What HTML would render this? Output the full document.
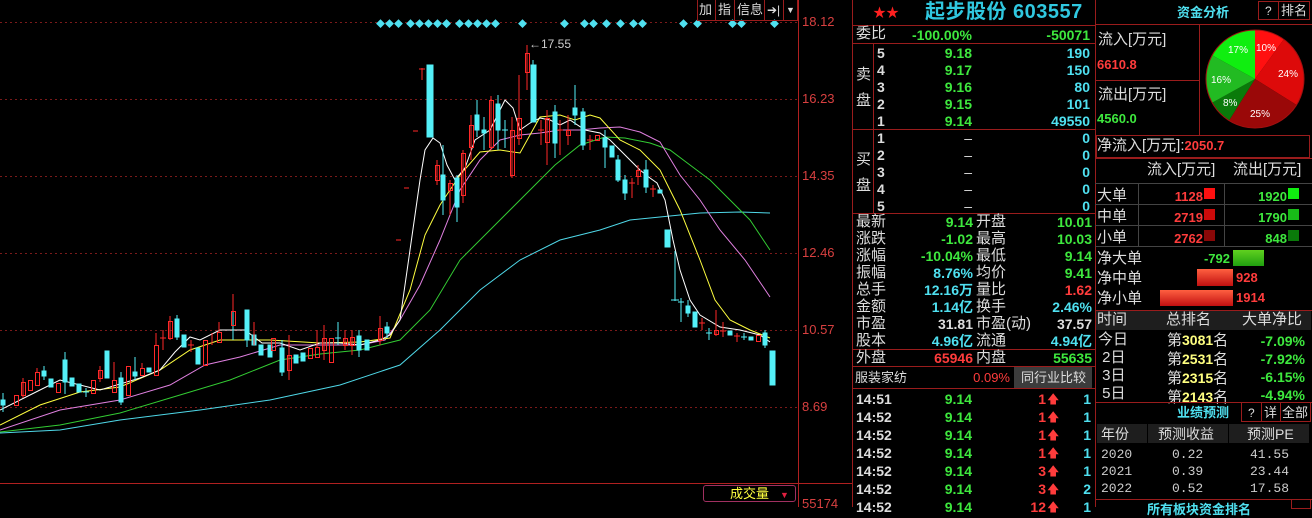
<!DOCTYPE html>
<html><head><meta charset="utf-8">
<style>
*{margin:0;padding:0;box-sizing:border-box}
body{width:1312px;height:507px;background:#000;overflow:hidden;position:relative;font-family:"Liberation Sans","Noto Sans CJK SC",sans-serif;font-size:14px;color:#ddd}
.t{position:absolute;line-height:16px;white-space:nowrap}
.r{text-align:right}
.b{font-weight:bold}
.g{color:#3ee83e}.rd{color:#ff3c3c}.c{color:#4fe0f0}.w{color:#ddd}.y{color:#ffff80}
.hl{position:absolute;height:1px;background:#9a1c1c}
.vl{position:absolute;width:1px;background:#9a1c1c}
.ax{position:absolute;color:#d84040;font-size:13px;line-height:14px}
.box{position:absolute;border:1px solid #9a1c1c}
</style></head><body>

<svg width="852" height="507" style="position:absolute;left:0;top:0">
<g stroke="#7a1a1a" stroke-dasharray="2,3" stroke-width="1">
<line x1="0" y1="22.5" x2="798" y2="22.5"/><line x1="0" y1="99.5" x2="798" y2="99.5"/>
<line x1="0" y1="176.5" x2="798" y2="176.5"/><line x1="0" y1="253.5" x2="798" y2="253.5"/>
<line x1="0" y1="330.5" x2="798" y2="330.5"/><line x1="0" y1="407.5" x2="798" y2="407.5"/>
</g>
<line x1="798.5" y1="0" x2="798.5" y2="507" stroke="#b02020"/>
<line x1="0" y1="483.5" x2="852" y2="483.5" stroke="#b02020"/>
<g fill="#4fe0f0" font-size="9">
<text x="376" y="27">◆◆◆</text><text x="406" y="27">◆◆◆◆◆</text><text x="442" y="27">◆</text><text x="455" y="27">◆◆◆◆◆</text>
<text x="518" y="27">◆</text><text x="560" y="27">◆</text><text x="580" y="27">◆◆</text><text x="602" y="27">◆</text>
<text x="616" y="27">◆</text><text x="629" y="27">◆◆</text><text x="679" y="27">◆</text><text x="693" y="27">◆</text>
<text x="728" y="27">◆◆</text><text x="770" y="27">◆</text>
</g>
<text x="529" y="48" fill="#ccc" font-size="12">←17.55</text>
<g fill="none" stroke-width="1">
<polyline stroke="#4fd8e8" points="0,433 60,430 120,420 200,410 270,400 340,385 400,365 440,330 480,290 520,260 560,240 600,230 630,220 660,217 700,213 740,212 770,213"/>
<polyline stroke="#33cc33" points="0,432 60,425 120,413 180,395 230,380 280,360 320,354 360,350 400,340 430,310 460,260 500,220 530,190 555,165 580,145 605,137 625,138 650,143 670,150 690,165 710,180 730,200 750,220 770,250"/>
<polyline stroke="#e080e0" points="0,430 60,410 120,400 170,385 205,365 240,357 280,345 320,345 360,345 385,340 400,320 420,285 440,240 460,190 480,160 500,140 520,135 540,133 560,130 580,130 600,128 620,127 640,132 660,142 680,175 700,200 720,230 745,260 770,297"/>
<polyline stroke="#ffff40" points="0,425 40,405 80,392 120,387 160,370 190,350 220,340 270,340 320,343 360,342 390,338 410,290 425,235 440,205 460,175 480,152 500,150 520,153 540,117 560,115 575,120 590,115 600,118 620,140 640,150 660,170 680,210 700,260 715,300 730,320 750,330 770,338"/>
<polyline stroke="#ffffff" points="0,410 40,390 60,380 100,390 140,378 160,370 175,352 190,337 200,340 220,330 245,330 262,343 280,343 300,350 320,343 340,343 360,345 380,340 390,335 400,320 410,250 420,180 425,150 433,138 440,143 447,165 455,180 465,168 475,140 490,130 505,100 513,108 520,130 530,123 540,118 550,120 560,125 570,120 585,130 600,133 610,140 620,150 630,160 640,170 650,178 657,183 665,200 673,240 680,270 690,300 700,315 720,327 740,330 760,335 770,342"/>
</g>
<g fill="#54f0f8" stroke="#54f0f8">
<line x1="3" y1="393" x2="3" y2="412"/><rect x="1" y="400" width="4" height="5"/>
<rect x="42" y="371" width="4" height="5"/><line x1="44" y1="366" x2="44" y2="380"/>
<rect x="49" y="379" width="4" height="8"/>
<line x1="65" y1="352" x2="65" y2="394"/><rect x="63" y="360" width="4" height="22"/>
<rect x="70" y="378" width="4" height="8"/><rect x="77" y="384" width="4" height="8"/><line x1="86" y1="388" x2="86" y2="397"/><line x1="83" y1="392" x2="89" y2="392"/>
<rect x="105" y="351" width="4" height="27"/>
<line x1="121" y1="372" x2="121" y2="405"/><rect x="119" y="378" width="4" height="24"/>
<line x1="135" y1="357" x2="135" y2="380"/><rect x="133" y="372" width="4" height="4"/>
<rect x="147" y="368" width="4" height="4"/>
<rect x="175" y="319" width="4" height="18"/><line x1="177" y1="315" x2="177" y2="340"/>
<rect x="182" y="335" width="4" height="12"/>
<rect x="196" y="348" width="4" height="16"/>
<line x1="233" y1="309" x2="233" y2="340"/>
<rect x="245" y="310" width="4" height="30"/><line x1="247" y1="310" x2="247" y2="347"/>
<rect x="252" y="335" width="4" height="10"/>
<rect x="259" y="345" width="4" height="10"/>
<rect x="268" y="345" width="4" height="12"/>
<rect x="280" y="348" width="4" height="24"/><line x1="282" y1="340" x2="282" y2="376"/>
<rect x="294" y="355" width="4" height="8"/><rect x="301" y="353" width="4" height="8"/>
<line x1="338" y1="322" x2="338" y2="345"/><line x1="335" y1="338" x2="341" y2="338"/>
<rect x="357" y="336" width="4" height="14"/><line x1="359" y1="330" x2="359" y2="357"/>
<rect x="365" y="340" width="4" height="10"/>
<rect x="385" y="327" width="4" height="6"/><line x1="387" y1="322" x2="387" y2="338"/>
<rect x="427" y="65" width="6" height="72"/>
<rect x="441" y="175" width="4" height="25"/><line x1="443" y1="145" x2="443" y2="215"/>
<rect x="455" y="178" width="4" height="29"/><line x1="457" y1="175" x2="457" y2="222"/>
<rect x="475" y="115" width="4" height="15"/><line x1="477" y1="100" x2="477" y2="137"/>
<rect x="482" y="130" width="4" height="3"/><line x1="484" y1="117" x2="484" y2="150"/>
<rect x="496" y="104" width="4" height="26"/><line x1="498" y1="95" x2="498" y2="150"/>
<line x1="505" y1="120" x2="505" y2="148"/><line x1="502" y1="130" x2="508" y2="130"/>
<rect x="531" y="65" width="5" height="57"/><line x1="533" y1="60" x2="533" y2="122"/>
<rect x="553" y="112" width="4" height="31"/><line x1="555" y1="105" x2="555" y2="158"/>
<rect x="573" y="108" width="4" height="7"/><line x1="575" y1="85" x2="575" y2="125"/>
<rect x="581" y="112" width="4" height="33"/><line x1="583" y1="108" x2="583" y2="150"/>
<rect x="603" y="138" width="4" height="9"/><line x1="605" y1="130" x2="605" y2="168"/>
<rect x="610" y="146" width="4" height="11"/><rect x="616" y="160" width="4" height="20"/><line x1="618" y1="155" x2="618" y2="182"/>
<rect x="623" y="180" width="4" height="13"/><line x1="625" y1="175" x2="625" y2="200"/>
<rect x="644" y="170" width="4" height="17"/><line x1="646" y1="160" x2="646" y2="193"/>
<rect x="658" y="190" width="4" height="3"/>
<rect x="665" y="230" width="5" height="17"/>
<line x1="675" y1="251" x2="675" y2="301"/><line x1="671" y1="300" x2="679" y2="300"/>
<line x1="681" y1="298" x2="681" y2="322"/><line x1="678" y1="302" x2="684" y2="302"/>
<rect x="686" y="306" width="4" height="7"/><line x1="688" y1="300" x2="688" y2="317"/>
<rect x="693" y="312" width="4" height="15"/>
<line x1="709" y1="328" x2="709" y2="340"/><line x1="706" y1="333" x2="712" y2="333"/>
<rect x="728" y="331" width="4" height="4"/>
<line x1="744" y1="333" x2="744" y2="340"/><line x1="741" y1="337" x2="747" y2="337"/>
<rect x="749" y="337" width="4" height="3"/>
<rect x="763" y="333" width="4" height="12"/><line x1="765" y1="330" x2="765" y2="348"/>
<rect x="770" y="351" width="5" height="34"/>
</g>
<g fill="none" stroke="#ff2828">
<rect x="14.5" y="395.5" width="4" height="10"/><rect x="21.5" y="382.5" width="4" height="13"/><line x1="23" y1="378" x2="23" y2="398"/>
<rect x="28.5" y="380.5" width="4" height="10"/><rect x="35.5" y="372.5" width="4" height="13"/><line x1="37" y1="368" x2="37" y2="372"/>
<rect x="56.5" y="383.5" width="4" height="9"/>
<rect x="91.5" y="380.5" width="4" height="13"/>
<rect x="98.5" y="370.5" width="4" height="8"/><line x1="100" y1="366" x2="100" y2="382"/>
<rect x="112.5" y="380.5" width="4" height="12"/><line x1="114" y1="362" x2="114" y2="380"/>
<rect x="126.5" y="366.5" width="4" height="29"/>
<rect x="140.5" y="368.5" width="4" height="7"/><line x1="142" y1="363" x2="142" y2="368"/>
<rect x="154.5" y="345.5" width="4" height="30"/><line x1="156" y1="333" x2="156" y2="345"/>
<line x1="163" y1="330" x2="163" y2="350"/><line x1="160" y1="338" x2="166" y2="338"/>
<rect x="168.5" y="321.5" width="4" height="17"/><line x1="170" y1="316" x2="170" y2="340"/>
<line x1="191" y1="340" x2="191" y2="352"/><line x1="188" y1="345" x2="194" y2="345"/>
<rect x="203.5" y="340.5" width="4" height="25"/>
<line x1="212" y1="333" x2="212" y2="345"/>
<rect x="217.5" y="332.5" width="4" height="10"/><line x1="219" y1="322" x2="219" y2="332"/>
<rect x="231.5" y="311.5" width="4" height="14"/><line x1="233" y1="294" x2="233" y2="311"/>
<line x1="254" y1="322" x2="254" y2="345"/>
<rect x="271.5" y="338.5" width="4" height="12"/>
<rect x="287.5" y="355.5" width="4" height="15"/><line x1="289" y1="335" x2="289" y2="380"/>
<rect x="308.5" y="348.5" width="4" height="10"/><rect x="315.5" y="347.5" width="4" height="10"/><line x1="317" y1="330" x2="317" y2="347"/>
<rect x="322.5" y="338.5" width="4" height="12"/><line x1="324" y1="325" x2="324" y2="360"/>
<rect x="329.5" y="338.5" width="4" height="24"/>
<rect x="343.5" y="338.5" width="4" height="7"/><line x1="345" y1="330" x2="345" y2="350"/>
<rect x="350.5" y="337.5" width="4" height="8"/><line x1="352" y1="330" x2="352" y2="355"/>
<rect x="378.5" y="328.5" width="4" height="12"/><line x1="380" y1="316" x2="380" y2="345"/>
<line x1="422" y1="68" x2="422" y2="80"/><line x1="419" y1="69" x2="425" y2="69"/>
<line x1="413" y1="131" x2="418" y2="131"/><line x1="404" y1="188" x2="409" y2="188"/><line x1="396" y1="240" x2="401" y2="240"/>
<rect x="435.5" y="165.5" width="4" height="15"/><line x1="437" y1="160" x2="437" y2="185"/>
<rect x="448.5" y="183.5" width="4" height="7"/><line x1="450" y1="180" x2="450" y2="215"/>
<rect x="461.5" y="153.5" width="4" height="42"/><line x1="463" y1="150" x2="463" y2="203"/>
<rect x="469.5" y="125.5" width="4" height="22"/><line x1="471" y1="115" x2="471" y2="160"/>
<rect x="489.5" y="100.5" width="4" height="47"/><line x1="491" y1="96" x2="491" y2="150"/>
<rect x="510.5" y="130.5" width="4" height="45"/><line x1="512" y1="117" x2="512" y2="178"/>
<rect x="517.5" y="118.5" width="4" height="20"/><line x1="519" y1="75" x2="519" y2="145"/>
<rect x="525.5" y="53.5" width="4" height="19"/><line x1="527" y1="45" x2="527" y2="90"/>
<line x1="541" y1="120" x2="541" y2="145"/><line x1="538" y1="130" x2="544" y2="130"/>
<rect x="545.5" y="118.5" width="4" height="24"/><line x1="547" y1="110" x2="547" y2="165"/>
<line x1="560" y1="120" x2="560" y2="155"/><line x1="557" y1="130" x2="563" y2="130"/>
<rect x="566.5" y="130.5" width="4" height="5"/><line x1="568" y1="115" x2="568" y2="145"/>
<line x1="590" y1="135" x2="590" y2="150"/><line x1="587" y1="140" x2="593" y2="140"/>
<rect x="595.5" y="135.5" width="4" height="5"/>
<line x1="632" y1="178" x2="632" y2="198"/><line x1="629" y1="183" x2="635" y2="183"/>
<rect x="636.5" y="170.5" width="4" height="6"/><line x1="638" y1="165" x2="638" y2="185"/>
<line x1="653" y1="185" x2="653" y2="197"/><line x1="650" y1="189" x2="656" y2="189"/>
<line x1="702" y1="318" x2="702" y2="330"/><line x1="699" y1="323" x2="705" y2="323"/>
<rect x="714.5" y="330.5" width="4" height="4"/><line x1="716" y1="310" x2="716" y2="336"/>
<line x1="723" y1="322" x2="723" y2="337"/><line x1="720" y1="331" x2="726" y2="331"/>
<line x1="737" y1="333" x2="737" y2="342"/><line x1="734" y1="336" x2="740" y2="336"/>
<rect x="756.5" y="335.5" width="4" height="6"/>
</g>
</svg>

<div class="ax" style="left:802px;top:15px">18.12</div>
<div class="ax" style="left:802px;top:92px">16.23</div>
<div class="ax" style="left:802px;top:169px">14.35</div>
<div class="ax" style="left:802px;top:246px">12.46</div>
<div class="ax" style="left:802px;top:323px">10.57</div>
<div class="ax" style="left:802px;top:400px">8.69</div>
<div class="ax" style="left:802px;top:497px">55174</div>

<div class="box" style="left:697px;top:0;width:101px;height:21px;border-top:none"></div>
<div class="t w" style="left:699px;top:2px;font-size:13px">加</div>
<div class="vl" style="left:715px;top:0;height:21px"></div>
<div class="t w" style="left:718px;top:2px;font-size:13px">指</div>
<div class="vl" style="left:734px;top:0;height:21px"></div>
<div class="t w" style="left:737px;top:2px;font-size:13px">信息</div>
<div class="vl" style="left:764px;top:0;height:21px"></div>
<div class="t w" style="left:767px;top:2px;font-size:12px">➔|</div>
<div class="vl" style="left:783px;top:0;height:21px"></div>
<div class="t w" style="left:786px;top:2px;font-size:9px">▼</div>

<div style="position:absolute;left:703px;top:485px;width:93px;height:17px;border:1px solid #a03060;border-radius:3px"></div>
<div class="t" style="left:730px;top:486px;color:#ffff40;font-size:13px">成交量</div>
<div class="t" style="left:780px;top:487px;color:#e02040;font-size:9px">▼</div>

<div class="vl" style="left:852px;top:0;height:507px"></div>
<div class="vl" style="left:1095px;top:0;height:507px"></div>
<div class="t" style="left:873px;top:5px;color:#ff2020;font-size:13px">★★</div>
<div class="t b" style="left:925px;top:1px;color:#30c8e0;font-size:20px;line-height:23px;letter-spacing:0.5px">起步股份 603557</div>
<div class="hl" style="left:852px;top:25px;width:243px"></div>
<div class="t w" style="left:856px;top:26px;font-size:15px">委比</div>
<div class="t g b" style="left:912px;top:27px">-100.00%</div>
<div class="t g b r" style="left:1000px;top:27px;width:90px">-50071</div>
<div class="hl" style="left:852px;top:43px;width:243px"></div>
<div class="vl" style="left:873px;top:43px;height:170px"></div>
<div class="t w" style="left:856px;top:62px;font-size:15px;line-height:26px">卖<br>盘</div>
<div class="t w" style="left:856px;top:147px;font-size:15px;line-height:26px">买<br>盘</div>
<div class="t w b" style="left:877px;top:45px;line-height:17px">5<br>4<br>3<br>2<br>1</div>
<div class="t g b r" style="left:920px;top:45px;width:52px;line-height:17px">9.18<br>9.17<br>9.16<br>9.15<br>9.14</div>
<div class="t c b r" style="left:1000px;top:45px;width:90px;line-height:17px">190<br>150<br>80<br>101<br>49550</div>
<div class="hl" style="left:852px;top:129px;width:243px"></div>
<div class="t w b" style="left:877px;top:130px;line-height:17px">1<br>2<br>3<br>4<br>5</div>
<div class="t w r" style="left:920px;top:130px;width:52px;line-height:17px">–<br>–<br>–<br>–<br>–</div>
<div class="t c b r" style="left:1000px;top:130px;width:90px;line-height:17px">0<br>0<br>0<br>0<br>0</div>
<div class="hl" style="left:852px;top:213px;width:243px"></div>
<div class="t w" style="left:856px;top:213px;font-size:15px;line-height:17px">最新<br>涨跌<br>涨幅<br>振幅<br>总手<br>金额<br>市盈<br>股本</div>
<div class="t b r" style="left:900px;top:214px;width:73px;line-height:17px"><span class="g">9.14</span><br><span class="g">-1.02</span><br><span class="g">-10.04%</span><br><span class="c">8.76%</span><br><span class="c">12.16万</span><br><span class="c">1.14亿</span><br><span class="w">31.81</span><br><span class="c">4.96亿</span></div>
<div class="t w" style="left:976px;top:213px;font-size:15px;line-height:17px">开盘<br>最高<br>最低<br>均价<br>量比<br>换手<br>市盈(动)<br>流通</div>
<div class="t b r" style="left:1020px;top:214px;width:72px;line-height:17px"><span class="g">10.01</span><br><span class="g">10.03</span><br><span class="g">9.14</span><br><span class="g">9.41</span><br><span class="rd">1.62</span><br><span class="c">2.46%</span><br><span class="w">37.57</span><br><span class="c">4.94亿</span></div>
<div class="hl" style="left:852px;top:349px;width:243px"></div>
<div class="t w" style="left:856px;top:349px;font-size:15px;line-height:17px">外盘</div>
<div class="t rd b r" style="left:900px;top:350px;width:73px">65946</div>
<div class="t w" style="left:976px;top:349px;font-size:15px;line-height:17px">内盘</div>
<div class="t g b r" style="left:1020px;top:350px;width:72px">55635</div>
<div class="hl" style="left:852px;top:366px;width:243px"></div>
<div class="t w" style="left:855px;top:370px;font-size:13px">服装家纺</div>
<div class="t rd r" style="left:960px;top:370px;width:50px;font-size:13px">0.09%</div>
<div style="position:absolute;left:1014px;top:367px;width:78px;height:21px;background:#3c3c3c"></div>
<div class="t w" style="left:1021px;top:370px;font-size:13px">同行业比较</div>
<div class="hl" style="left:852px;top:388px;width:243px"></div>
<div class="t w b" style="left:856px;top:390px;line-height:18px">14:51<br>14:52<br>14:52<br>14:52<br>14:52<br>14:52<br>14:52</div>
<div class="t g b r" style="left:920px;top:390px;width:52px;line-height:18px">9.14<br>9.14<br>9.14<br>9.14<br>9.14<br>9.14<br>9.14</div>
<div class="t rd b r" style="left:1000px;top:390px;width:46px;line-height:18px">1<br>1<br>1<br>1<br>3<br>3<br>12</div>
<div class="t rd" style="left:1047px;top:390px;width:14px;line-height:18px;font-size:12px">🡅<br>🡅<br>🡅<br>🡅<br>🡅<br>🡅<br>🡅</div>
<div class="t c b r" style="left:1060px;top:390px;width:31px;line-height:18px">1<br>1<br>1<br>1<br>1<br>2<br>1</div>

<div class="t c b" style="left:1177px;top:5px;font-size:13px">资金分析</div>
<div class="box" style="left:1258px;top:1px;width:21px;height:19px"></div>
<div class="t w" style="left:1265px;top:3px;font-size:12px">?</div>
<div class="box" style="left:1278px;top:1px;width:32px;height:19px"></div>
<div class="t w" style="left:1281px;top:3px;font-size:13px">排名</div>
<div class="hl" style="left:1095px;top:24px;width:217px"></div>
<div class="vl" style="left:1199px;top:24px;height:111px"></div>
<div class="t w" style="left:1098px;top:32px;font-size:15px">流入[万元]</div>
<div class="t rd b" style="left:1097px;top:57px;font-size:13px">6610.8</div>
<div class="hl" style="left:1095px;top:80px;width:104px"></div>
<div class="t w" style="left:1098px;top:87px;font-size:15px">流出[万元]</div>
<div class="t g b" style="left:1097px;top:111px;font-size:13px">4560.0</div>
<svg width="1312" height="507" style="position:absolute;left:0;top:0" font-family="Liberation Sans" font-size="10" fill="#fff">
<path d="M1255,79 L1255,30 A49,49 0 0 1 1283.8,39.4Z" fill="#ff1010"/>
<path d="M1255,79 L1283.8,39.4 A49,49 0 0 1 1296.6,105Z" fill="#dd0a0a"/>
<path d="M1255,79 L1296.6,105 A49,49 0 0 1 1229,120.6Z" fill="#9a0808"/>
<path d="M1255,79 L1229,120.6 A49,49 0 0 1 1212.1,102.8Z" fill="#0a7a0a"/>
<path d="M1255,79 L1212.1,102.8 A49,49 0 0 1 1212.1,55.2Z" fill="#22bb22"/>
<path d="M1255,79 L1212.1,55.2 A49,49 0 0 1 1255,30Z" fill="#10ee10"/>
<circle cx="1255" cy="79" r="49" fill="none" stroke="#a01010"/>
<text x="1256" y="51">10%</text><text x="1278" y="77">24%</text><text x="1250" y="117">25%</text>
<text x="1223" y="106">8%</text><text x="1211" y="83">16%</text><text x="1228" y="53">17%</text>
</svg>
<div class="box" style="left:1096px;top:135px;width:214px;height:23px"></div>
<div class="t w" style="left:1097px;top:138px;font-size:15px">净流入[万元]:<span class="rd b" style="font-size:13px">2050.7</span></div>
<div class="hl" style="left:1095px;top:158px;width:217px"></div>
<div class="t w" style="left:1147px;top:162px;font-size:15px">流入[万元]</div>
<div class="t w" style="left:1233px;top:162px;font-size:15px">流出[万元]</div>
<div class="hl" style="left:1095px;top:183px;width:217px;background:#444"></div>
<div class="hl" style="left:1095px;top:204px;width:217px;background:#444"></div>
<div class="hl" style="left:1095px;top:225px;width:217px;background:#444"></div>
<div class="hl" style="left:1095px;top:246px;width:217px;background:#444"></div>
<div class="vl" style="left:1138px;top:183px;height:63px;background:#444"></div>
<div class="vl" style="left:1224px;top:183px;height:63px;background:#444"></div>
<div class="t w" style="left:1097px;top:185px;font-size:15px;line-height:21px">大单<br>中单<br>小单</div>
<div class="t rd b r" style="left:1150px;top:186px;width:53px;line-height:21px;font-size:13px">1128<br>2719<br>2762</div>
<div style="position:absolute;left:1204px;top:188px;width:11px;height:11px;background:#ff1010"></div>
<div style="position:absolute;left:1204px;top:209px;width:11px;height:11px;background:#cc0a0a"></div>
<div style="position:absolute;left:1204px;top:230px;width:11px;height:11px;background:#8a0808"></div>
<div class="t g b r" style="left:1240px;top:186px;width:47px;line-height:21px;font-size:13px">1920<br>1790<br>848</div>
<div style="position:absolute;left:1288px;top:188px;width:11px;height:11px;background:#10ee10"></div>
<div style="position:absolute;left:1288px;top:209px;width:11px;height:11px;background:#18bb18"></div>
<div style="position:absolute;left:1288px;top:230px;width:11px;height:11px;background:#0a7a0a"></div>
<div class="t w" style="left:1097px;top:249px;font-size:15px;line-height:20px">净大单<br>净中单<br>净小单</div>
<div class="t g b r" style="left:1190px;top:251px;width:40px;font-size:13px">-792</div>
<div style="position:absolute;left:1233px;top:250px;width:31px;height:16px;background:linear-gradient(#60d020,#20a010)"></div>
<div style="position:absolute;left:1197px;top:269px;width:36px;height:17px;background:linear-gradient(#ff6040,#c01010)"></div>
<div class="t rd b" style="left:1236px;top:270px;font-size:13px">928</div>
<div style="position:absolute;left:1160px;top:290px;width:73px;height:16px;background:linear-gradient(#ff6040,#c01010)"></div>
<div class="t rd b" style="left:1236px;top:290px;font-size:13px">1914</div>
<div class="hl" style="left:1095px;top:310px;width:217px"></div>
<div style="position:absolute;left:1096px;top:311px;width:215px;height:19px;background:#1e1e1e"></div>
<div class="t w" style="left:1097px;top:312px;font-size:15px">时间</div>
<div class="t w" style="left:1166px;top:312px;font-size:15px">总排名</div>
<div class="t w" style="left:1242px;top:312px;font-size:15px">大单净比</div>
<div class="t w" style="left:1098px;top:331px;font-size:15px;line-height:18px">今日<br>&nbsp;2日<br>&nbsp;3日<br>&nbsp;5日</div>
<div class="t w" style="left:1167px;top:331px;font-size:15px;line-height:18px">第<span class="y b" style="font-size:14px">3081</span>名<br>第<span class="y b" style="font-size:14px">2531</span>名<br>第<span class="y b" style="font-size:14px">2315</span>名<br>第<span class="y b" style="font-size:14px">2143</span>名</div>
<div class="t g b r" style="left:1240px;top:332px;width:65px;line-height:18px">-7.09%<br>-7.92%<br>-6.15%<br>-4.94%</div>
<div class="hl" style="left:1095px;top:402px;width:217px"></div>
<div class="t c b" style="left:1177px;top:405px;font-size:13px">业绩预测</div>
<div class="box" style="left:1241px;top:402px;width:21px;height:20px"></div>
<div class="t w" style="left:1248px;top:405px;font-size:12px">?</div>
<div class="box" style="left:1261px;top:402px;width:20px;height:20px"></div>
<div class="t w" style="left:1264px;top:405px;font-size:13px">详</div>
<div class="box" style="left:1280px;top:402px;width:31px;height:20px"></div>
<div class="t w" style="left:1282px;top:405px;font-size:13px">全部</div>
<div style="position:absolute;left:1097px;top:424px;width:50px;height:19px;background:#1e1e1e"></div>
<div style="position:absolute;left:1148px;top:424px;width:80px;height:19px;background:#1e1e1e"></div>
<div style="position:absolute;left:1229px;top:424px;width:80px;height:19px;background:#1e1e1e"></div>
<div class="t w" style="left:1101px;top:426px;font-size:14px">年份</div>
<div class="t w" style="left:1158px;top:426px;font-size:14px">预测收益</div>
<div class="t w" style="left:1247px;top:426px;font-size:14px">预测PE</div>
<div class="t" style="left:1101px;top:446px;color:#ccc;font-family:'Liberation Mono',monospace;font-size:13px;line-height:17px">2020<br>2021<br>2022</div>
<div class="t" style="left:1172px;top:446px;color:#ccc;font-family:'Liberation Mono',monospace;font-size:13px;line-height:17px">0.22<br>0.39<br>0.52</div>
<div class="t" style="left:1250px;top:446px;color:#ccc;font-family:'Liberation Mono',monospace;font-size:13px;line-height:17px">41.55<br>23.44<br>17.58</div>
<div class="hl" style="left:1095px;top:499px;width:217px"></div>
<div class="t c b" style="left:1147px;top:502px;font-size:13px">所有板块资金排名</div>
<div class="box" style="left:1291px;top:499px;width:20px;height:10px"></div>
</body></html>
